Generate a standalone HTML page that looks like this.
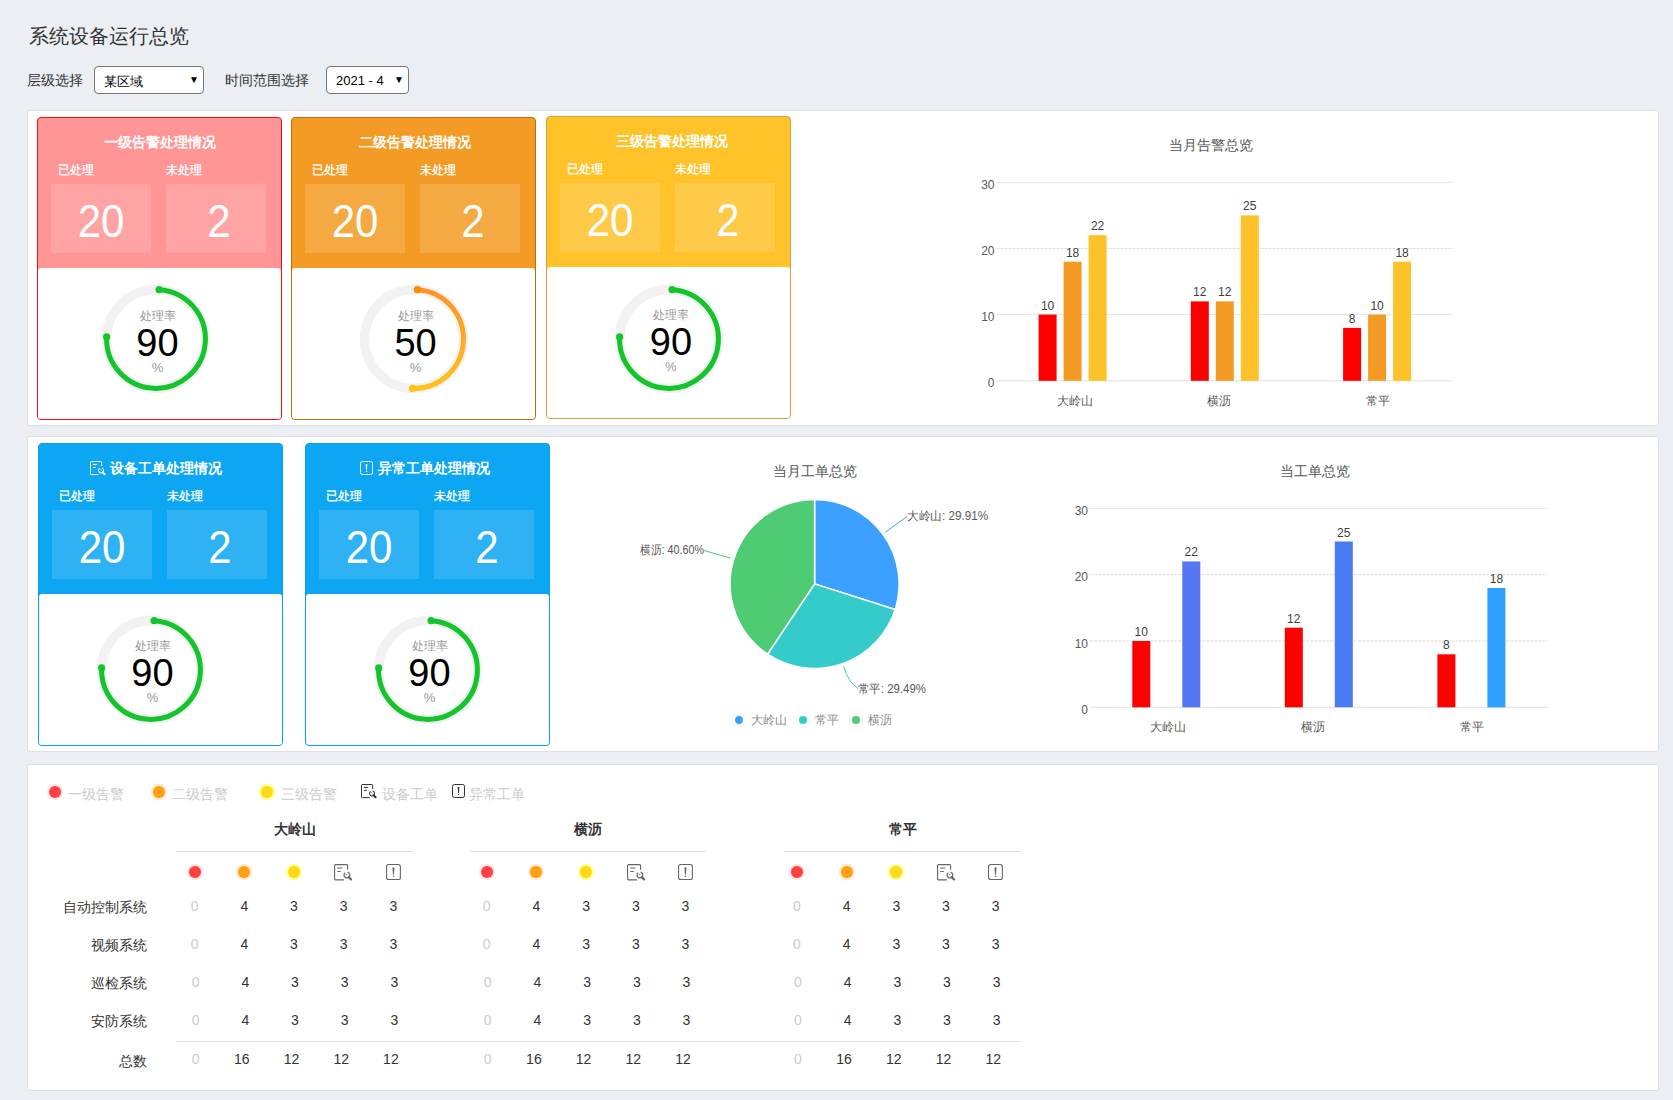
<!DOCTYPE html>
<html><head><meta charset="utf-8"><title>系统设备运行总览</title>
<style>
*{margin:0;padding:0;box-sizing:border-box}
html,body{width:1673px;height:1100px;overflow:hidden}
body{background:#ebeef3;font-family:"Liberation Sans", sans-serif;color:#333;position:relative}
.abs{position:absolute;white-space:nowrap}
.panel{position:absolute;left:27px;width:1632px;background:#fff;border:1px solid #e0e0e0;border-radius:3px}
.card{position:absolute;width:245px;height:303px;border:1px solid;border-radius:4px;overflow:hidden}
.card .body{position:absolute;left:0;top:150px;width:243px;height:151px;background:#fff;border-radius:3px 3px 0 0}
.card .ttl{position:absolute;left:0;width:243px;top:14px;height:20px;line-height:20px;text-align:center;color:#fff;font-size:14px;font-weight:bold}
.card .lbl{position:absolute;top:43.5px;height:16px;line-height:16px;font-size:12px;color:#fff;-webkit-text-stroke:0.3px #fff}
.card .box{position:absolute;top:66px;width:100px;height:69px;background:rgba(255,255,255,0.14);color:#fff;font-size:42px;line-height:69px;text-align:center}
.card .box span{display:inline-block;transform:scaleY(1.1) translateY(2px)}
.g{position:absolute;width:120px;height:120px}
.g .t1{position:absolute;left:0;width:120px;text-align:center;font-size:12px;color:#999;line-height:14px}
.g .t2{position:absolute;left:0;width:120px;text-align:center;font-size:38px;color:#000;line-height:38px}
.g .t3{position:absolute;left:0;width:120px;text-align:center;font-size:13px;color:#999;line-height:14px}
</style></head><body>

<div class="abs" style="left:29px;top:22px;font-size:20px;line-height:28px;color:#333">系统设备运行总览</div>
<div class="abs" style="left:27px;top:70px;font-size:14px;line-height:20px;color:#333">层级选择</div>
<div class="abs" style="left:94px;top:66px;width:110px;height:28px;border:1px solid #767676;border-radius:4px;background:#fff"></div>
<div class="abs" style="left:104px;top:74px;font-size:13px;line-height:16px;color:#000">某区域</div>
<div class="abs" style="left:189px;top:74px;font-size:10px;line-height:12px;color:#000">▼</div>
<div class="abs" style="left:225px;top:70px;font-size:14px;line-height:20px;color:#333">时间范围选择</div>
<div class="abs" style="left:326px;top:66px;width:83px;height:28px;border:1px solid #767676;border-radius:4px;background:#fff"></div>
<div class="abs" style="left:336px;top:73px;font-size:13px;line-height:16px;color:#000">2021 - 4</div>
<div class="abs" style="left:394px;top:74px;font-size:10px;line-height:12px;color:#000">▼</div>
<div class="panel" style="top:110px;height:316px"></div>
<div class="panel" style="top:436px;height:316px"></div>
<div class="panel" style="top:764px;height:327px"></div>
<div class="card" style="left:37px;top:117px;background:#ff9595;border-color:#f01010"><div class="ttl" style="left:0.5px">一级告警处理情况</div><div class="lbl" style="left:20px">已处理</div><div class="lbl" style="left:128px">未处理</div><div class="box" style="left:13px"><span>20</span></div><div class="box" style="left:128px;padding-left:6px"><span>2</span></div><div class="body"></div></div><svg class="abs" style="left:95.5px;top:279.4px" width="120" height="120" viewBox="95.5 279.4 120 120"><circle cx="155.5" cy="339.4" r="49.4" fill="none" stroke="#f2f2f2" stroke-width="9.6"/><path d="M158.60,290.10 A49.4,49.4 0 1 1 106.14,337.33" fill="none" stroke="#13c52b" stroke-width="5" stroke-linecap="round"/><circle cx="158.60" cy="290.10" r="3.6" fill="#13c52b"/><circle cx="106.14" cy="337.33" r="3.6" fill="#13c52b"/></svg><div class="g" style="left:97.5px;top:279.4px"><div class="t1" style="top:30px">处理率</div><div class="t2" style="top:44.5px">90</div><div class="t3" style="top:82px">%</div></div>
<div class="card" style="left:291px;top:117px;background:#f39b25;border-color:#b8700a"><div class="ttl" style="left:1px">二级告警处理情况</div><div class="lbl" style="left:20px">已处理</div><div class="lbl" style="left:128px">未处理</div><div class="box" style="left:13px"><span>20</span></div><div class="box" style="left:128px;padding-left:6px"><span>2</span></div><div class="body"></div></div><svg class="abs" style="left:353.6px;top:279.1px" width="120" height="120" viewBox="353.6 279.1 120 120"><defs><linearGradient id="gg2" x1="0" y1="0" x2="0" y2="1"><stop offset="0" stop-color="#ff9429"/><stop offset="1" stop-color="#ffc21e"/></linearGradient></defs><circle cx="413.6" cy="339.1" r="49.4" fill="none" stroke="#f2f2f2" stroke-width="9.6"/><path d="M417.05,289.82 A49.4,49.4 0 0 1 412.13,388.48" fill="none" stroke="url(#gg2)" stroke-width="5" stroke-linecap="round"/><circle cx="417.05" cy="289.82" r="3.6" fill="#ff8800"/><circle cx="412.13" cy="388.48" r="3.6" fill="#ffc400"/></svg><div class="g" style="left:355.6px;top:279.1px"><div class="t1" style="top:30px">处理率</div><div class="t2" style="top:44.5px">50</div><div class="t3" style="top:82px">%</div></div>
<div class="card" style="left:546px;top:116px;background:#ffc229;border-color:#d9a040"><div class="ttl" style="left:3px">三级告警处理情况</div><div class="lbl" style="left:20px">已处理</div><div class="lbl" style="left:128px">未处理</div><div class="box" style="left:13px"><span>20</span></div><div class="box" style="left:128px;padding-left:6px"><span>2</span></div><div class="body"></div></div><svg class="abs" style="left:608.9px;top:279.3px" width="120" height="120" viewBox="608.9 279.3 120 120"><circle cx="668.9" cy="339.3" r="49.4" fill="none" stroke="#f2f2f2" stroke-width="9.6"/><path d="M672.00,290.00 A49.4,49.4 0 1 1 619.54,337.23" fill="none" stroke="#13c52b" stroke-width="5" stroke-linecap="round"/><circle cx="672.00" cy="290.00" r="3.6" fill="#13c52b"/><circle cx="619.54" cy="337.23" r="3.6" fill="#13c52b"/></svg><div class="g" style="left:610.9px;top:278.3px"><div class="t1" style="top:30px">处理率</div><div class="t2" style="top:44.5px">90</div><div class="t3" style="top:82px">%</div></div>
<div class="card" style="left:38px;top:443px;background:#0ca6f2;border-color:#05a0f0"><div class="ttl" style="left:71px;width:auto;text-align:left">设备工单处理情况</div><svg class="abs" style="left:51px;top:17.2px;overflow:visible" width="16.00" height="15.00" viewBox="0 0 16 15"><path d="M11.6 4.9V1.3Q11.6 0.5 10.8 0.5H1.3Q0.5 0.5 0.5 1.3V12.8Q0.5 13.6 1.3 13.6H8.6" fill="none" stroke="#fff" stroke-width="1.0"/><path d="M2.8 3.4H7.2M2.8 6.4H5.8" fill="none" stroke="#fff" stroke-width="1.0"/><path d="M9.6 7.4A2.5 2.5 0 1 0 11.6 7.0" fill="none" stroke="#fff" stroke-width="1.1"/><path d="M10.5 8.6L11.3 9.3" fill="none" stroke="#fff" stroke-width="1.0"/><path d="M12.6 11.2L14.6 13.2" fill="none" stroke="#fff" stroke-width="2.0" stroke-linecap="round"/></svg><div class="lbl" style="left:20px">已处理</div><div class="lbl" style="left:128px">未处理</div><div class="box" style="left:13px"><span>20</span></div><div class="box" style="left:128px;padding-left:6px"><span>2</span></div><div class="body"></div></div><svg class="abs" style="left:90.5px;top:610.4px" width="120" height="120" viewBox="90.5 610.4 120 120"><circle cx="150.5" cy="670.4" r="49.4" fill="none" stroke="#f2f2f2" stroke-width="9.6"/><path d="M153.60,621.10 A49.4,49.4 0 1 1 101.14,668.33" fill="none" stroke="#13c52b" stroke-width="5" stroke-linecap="round"/><circle cx="153.60" cy="621.10" r="3.6" fill="#13c52b"/><circle cx="101.14" cy="668.33" r="3.6" fill="#13c52b"/></svg><div class="g" style="left:92.5px;top:609.4px"><div class="t1" style="top:30px">处理率</div><div class="t2" style="top:44.5px">90</div><div class="t3" style="top:82px">%</div></div>
<div class="card" style="left:305px;top:443px;background:#0ca6f2;border-color:#05a0f0"><div class="ttl" style="left:72px;width:auto;text-align:left">异常工单处理情况</div><svg class="abs" style="left:54px;top:17.2px;overflow:visible" width="14.00" height="15.00" viewBox="0 0 14 15"><rect x="0.5" y="0.5" width="12" height="13" rx="1.8" fill="none" stroke="#fff" stroke-width="1.0"/><path d="M5.6 3.3Q6.5 2.5 7.4 3.3L6.9 9.3H6.1Z" fill="#fff"/><circle cx="6.5" cy="10.6" r="0.65" fill="#fff"/></svg><div class="lbl" style="left:20px">已处理</div><div class="lbl" style="left:128px">未处理</div><div class="box" style="left:13px"><span>20</span></div><div class="box" style="left:128px;padding-left:6px"><span>2</span></div><div class="body"></div></div><svg class="abs" style="left:367.5px;top:610.4px" width="120" height="120" viewBox="367.5 610.4 120 120"><circle cx="427.5" cy="670.4" r="49.4" fill="none" stroke="#f2f2f2" stroke-width="9.6"/><path d="M430.60,621.10 A49.4,49.4 0 1 1 378.14,668.33" fill="none" stroke="#13c52b" stroke-width="5" stroke-linecap="round"/><circle cx="430.60" cy="621.10" r="3.6" fill="#13c52b"/><circle cx="378.14" cy="668.33" r="3.6" fill="#13c52b"/></svg><div class="g" style="left:369.5px;top:609.4px"><div class="t1" style="top:30px">处理率</div><div class="t2" style="top:44.5px">90</div><div class="t3" style="top:82px">%</div></div>
<div class="abs" style="left:1111px;width:200px;text-align:center;top:135px;line-height:20px;font-size:14px;color:#555">当月告警总览</div><svg class="abs" style="left:0;top:0" width="1673" height="1100"><line x1="996.5" y1="380.8" x2="1453.2" y2="380.8" stroke="#e0e0e0" stroke-width="1"/><text x="994.5" y="387.3" text-anchor="end" font-size="12" fill="#595959" font-family="Liberation Sans">0</text><line x1="996.5" y1="314.6" x2="1453.2" y2="314.6" stroke="#dcdcdc" stroke-width="1" stroke-dasharray="3,1"/><text x="994.5" y="321.1" text-anchor="end" font-size="12" fill="#595959" font-family="Liberation Sans">10</text><line x1="996.5" y1="248.5" x2="1453.2" y2="248.5" stroke="#dcdcdc" stroke-width="1" stroke-dasharray="3,1"/><text x="994.5" y="255.0" text-anchor="end" font-size="12" fill="#595959" font-family="Liberation Sans">20</text><line x1="996.5" y1="182.3" x2="1453.2" y2="182.3" stroke="#dcdcdc" stroke-width="1" stroke-dasharray="3,1"/><text x="994.5" y="188.8" text-anchor="end" font-size="12" fill="#595959" font-family="Liberation Sans">30</text><rect x="1038.6" y="314.6" width="18" height="66.2" fill="#ff0000"/><text x="1047.6" y="309.6" text-anchor="middle" font-size="12" fill="#404040" font-family="Liberation Sans">10</text><rect x="1063.6" y="261.7" width="18" height="119.1" fill="#f39b25"/><text x="1072.6" y="256.7" text-anchor="middle" font-size="12" fill="#404040" font-family="Liberation Sans">18</text><rect x="1088.6" y="235.2" width="18" height="145.6" fill="#fdc22a"/><text x="1097.6" y="230.2" text-anchor="middle" font-size="12" fill="#404040" font-family="Liberation Sans">22</text><text x="1074.6" y="404.8" text-anchor="middle" font-size="12" fill="#595959">大岭山</text><rect x="1190.8" y="301.4" width="18" height="79.4" fill="#ff0000"/><text x="1199.8" y="296.4" text-anchor="middle" font-size="12" fill="#404040" font-family="Liberation Sans">12</text><rect x="1215.8" y="301.4" width="18" height="79.4" fill="#f39b25"/><text x="1224.8" y="296.4" text-anchor="middle" font-size="12" fill="#404040" font-family="Liberation Sans">12</text><rect x="1240.8" y="215.4" width="18" height="165.4" fill="#fdc22a"/><text x="1249.8" y="210.4" text-anchor="middle" font-size="12" fill="#404040" font-family="Liberation Sans">25</text><text x="1218.8" y="404.8" text-anchor="middle" font-size="12" fill="#595959">横沥</text><rect x="1343.1" y="327.9" width="18" height="52.9" fill="#ff0000"/><text x="1352.1" y="322.9" text-anchor="middle" font-size="12" fill="#404040" font-family="Liberation Sans">8</text><rect x="1368.1" y="314.6" width="18" height="66.2" fill="#f39b25"/><text x="1377.1" y="309.6" text-anchor="middle" font-size="12" fill="#404040" font-family="Liberation Sans">10</text><rect x="1393.1" y="261.7" width="18" height="119.1" fill="#fdc22a"/><text x="1402.1" y="256.7" text-anchor="middle" font-size="12" fill="#404040" font-family="Liberation Sans">18</text><text x="1377.6" y="404.8" text-anchor="middle" font-size="12" fill="#595959">常平</text></svg>
<div class="abs" style="left:1215px;width:200px;text-align:center;top:461px;line-height:20px;font-size:14px;color:#555">当工单总览</div><svg class="abs" style="left:0;top:0" width="1673" height="1100"><line x1="1090" y1="707.3" x2="1547.7" y2="707.3" stroke="#e0e0e0" stroke-width="1"/><text x="1088" y="713.8" text-anchor="end" font-size="12" fill="#595959" font-family="Liberation Sans">0</text><line x1="1090" y1="641.0" x2="1547.7" y2="641.0" stroke="#dcdcdc" stroke-width="1" stroke-dasharray="3,1"/><text x="1088" y="647.5" text-anchor="end" font-size="12" fill="#595959" font-family="Liberation Sans">10</text><line x1="1090" y1="574.7" x2="1547.7" y2="574.7" stroke="#dcdcdc" stroke-width="1" stroke-dasharray="3,1"/><text x="1088" y="581.2" text-anchor="end" font-size="12" fill="#595959" font-family="Liberation Sans">20</text><line x1="1090" y1="508.4" x2="1547.7" y2="508.4" stroke="#dcdcdc" stroke-width="1" stroke-dasharray="3,1"/><text x="1088" y="514.9" text-anchor="end" font-size="12" fill="#595959" font-family="Liberation Sans">30</text><rect x="1132.3" y="641.0" width="18" height="66.3" fill="#ff0000"/><text x="1141.3" y="636.0" text-anchor="middle" font-size="12" fill="#404040" font-family="Liberation Sans">10</text><rect x="1182.3" y="561.4" width="18" height="145.9" fill="#5677f3"/><text x="1191.3" y="556.4" text-anchor="middle" font-size="12" fill="#404040" font-family="Liberation Sans">22</text><text x="1168.3" y="731.3" text-anchor="middle" font-size="12" fill="#595959">大岭山</text><rect x="1284.8" y="627.7" width="18" height="79.6" fill="#ff0000"/><text x="1293.8" y="622.7" text-anchor="middle" font-size="12" fill="#404040" font-family="Liberation Sans">12</text><rect x="1334.8" y="541.5" width="18" height="165.7" fill="#4a7bf7"/><text x="1343.8" y="536.5" text-anchor="middle" font-size="12" fill="#404040" font-family="Liberation Sans">25</text><text x="1312.8" y="731.3" text-anchor="middle" font-size="12" fill="#595959">横沥</text><rect x="1437.4" y="654.3" width="18" height="53.0" fill="#ff0000"/><text x="1446.4" y="649.3" text-anchor="middle" font-size="12" fill="#404040" font-family="Liberation Sans">8</text><rect x="1487.4" y="588.0" width="18" height="119.3" fill="#2ea0ff"/><text x="1496.4" y="583.0" text-anchor="middle" font-size="12" fill="#404040" font-family="Liberation Sans">18</text><text x="1471.9" y="731.3" text-anchor="middle" font-size="12" fill="#595959">常平</text></svg>
<div class="abs" style="left:715px;width:200px;text-align:center;top:461px;line-height:20px;font-size:14px;color:#555">当月工单总览</div><svg class="abs" style="left:0;top:0" width="1673" height="1100"><path d="M814.6,583.9 L814.60,499.40 A84.5,84.5 0 0 1 895.11,609.56 Z" fill="#3ba0ff" stroke="#fff" stroke-width="1.5"/><path d="M814.6,583.9 L895.11,609.56 A84.5,84.5 0 0 1 767.54,654.09 Z" fill="#36cbcb" stroke="#fff" stroke-width="1.5"/><path d="M814.6,583.9 L767.54,654.09 A84.5,84.5 0 0 1 814.60,499.40 Z" fill="#4ecb73" stroke="#fff" stroke-width="1.5"/><path d="M885.2,532.3 L907,516.5" stroke="#3ba0ff" fill="none"/><path d="M730.8,558.2 L704,550.5" stroke="#4ecb73" fill="none"/><path d="M843.7,666.4 Q848,682 858,688.5" stroke="#36cbcb" fill="none"/><text x="907" y="520" font-size="12" fill="#595959" textLength="81" lengthAdjust="spacingAndGlyphs">大岭山: 29.91%</text><text x="640" y="554" font-size="12" fill="#595959" textLength="64" lengthAdjust="spacingAndGlyphs">横沥: 40.60%</text><text x="858" y="692.5" font-size="12" fill="#595959" textLength="68" lengthAdjust="spacingAndGlyphs">常平: 29.49%</text><circle cx="739" cy="720" r="4" fill="#3ba0ff"/><text x="751" y="724" font-size="12" fill="#8c8c8c">大岭山</text><circle cx="803" cy="720" r="4" fill="#36cbcb"/><text x="815" y="724" font-size="12" fill="#8c8c8c">常平</text><circle cx="856" cy="720" r="4" fill="#4ecb73"/><text x="868" y="724" font-size="12" fill="#8c8c8c">横沥</text></svg>
<div class="abs" style="left:48.9px;top:786.3px;width:12px;height:12px;border-radius:50%;background:#ff4141;box-shadow:0 0 0 2px #ffe3e3"></div>
<div class="abs" style="left:68px;top:784px;font-size:14px;line-height:20px;color:#ccc">一级告警</div>
<div class="abs" style="left:152.8px;top:786.3px;width:12px;height:12px;border-radius:50%;background:#ffa116;box-shadow:0 0 0 2px #ffe6c4"></div>
<div class="abs" style="left:172px;top:784px;font-size:14px;line-height:20px;color:#ccc">二级告警</div>
<div class="abs" style="left:260.9px;top:786.3px;width:12px;height:12px;border-radius:50%;background:#ffd816;box-shadow:0 0 0 2px #ffff88"></div>
<div class="abs" style="left:281px;top:784px;font-size:14px;line-height:20px;color:#ccc">三级告警</div>
<svg class="abs" style="left:361.2px;top:783.8px;overflow:visible" width="16.00" height="15.00" viewBox="0 0 16 15"><path d="M11.6 4.9V1.3Q11.6 0.5 10.8 0.5H1.3Q0.5 0.5 0.5 1.3V12.8Q0.5 13.6 1.3 13.6H8.6" fill="none" stroke="#333" stroke-width="1.0"/><path d="M2.8 3.4H7.2M2.8 6.4H5.8" fill="none" stroke="#333" stroke-width="1.0"/><path d="M9.6 7.4A2.5 2.5 0 1 0 11.6 7.0" fill="none" stroke="#333" stroke-width="1.1"/><path d="M10.5 8.6L11.3 9.3" fill="none" stroke="#333" stroke-width="1.0"/><path d="M12.6 11.2L14.6 13.2" fill="none" stroke="#333" stroke-width="2.0" stroke-linecap="round"/></svg>
<div class="abs" style="left:382px;top:784px;font-size:14px;line-height:20px;color:#ccc">设备工单</div>
<svg class="abs" style="left:451.9px;top:783.8px;overflow:visible" width="14.00" height="15.00" viewBox="0 0 14 15"><rect x="0.5" y="0.5" width="12" height="13" rx="1.8" fill="none" stroke="#333" stroke-width="1.0"/><path d="M5.6 3.3Q6.5 2.5 7.4 3.3L6.9 9.3H6.1Z" fill="#333"/><circle cx="6.5" cy="10.6" r="0.65" fill="#333"/></svg>
<div class="abs" style="left:469px;top:784px;font-size:14px;line-height:20px;color:#ccc">异常工单</div>
<svg class="abs" style="left:0;top:0" width="1673" height="1100">
<line x1="176" y1="851.5" x2="413" y2="851.5" stroke="#e0e0e0"/>
<line x1="469" y1="851.5" x2="706" y2="851.5" stroke="#e0e0e0"/>
<line x1="784" y1="851.5" x2="1021" y2="851.5" stroke="#e0e0e0"/>
<line x1="176" y1="1041.5" x2="1021" y2="1041.5" stroke="#e0e0e0"/>
</svg>
<div class="abs" style="left:234.5px;width:120px;text-align:center;top:819px;font-size:14px;line-height:20px;font-weight:bold;color:#333">大岭山</div>
<div class="abs" style="left:188.6px;top:866px;width:12px;height:12px;border-radius:50%;background:#ff4141;box-shadow:0 0 0 2px #ffe3e3"></div>
<div class="abs" style="left:238.3px;top:866px;width:12px;height:12px;border-radius:50%;background:#ffa116;box-shadow:0 0 0 2px #ffe6c4"></div>
<div class="abs" style="left:288.0px;top:866px;width:12px;height:12px;border-radius:50%;background:#ffd816;box-shadow:0 0 0 2px #ffff88"></div>
<svg class="abs" style="left:334.40000000000003px;top:863.5px;overflow:visible" width="18.72" height="17.55" viewBox="0 0 16 15"><path d="M11.6 4.9V1.3Q11.6 0.5 10.8 0.5H1.3Q0.5 0.5 0.5 1.3V12.8Q0.5 13.6 1.3 13.6H8.6" fill="none" stroke="#666" stroke-width="0.95"/><path d="M2.8 3.4H7.2M2.8 6.4H5.8" fill="none" stroke="#666" stroke-width="0.95"/><path d="M9.6 7.4A2.5 2.5 0 1 0 11.6 7.0" fill="none" stroke="#666" stroke-width="1.045"/><path d="M10.5 8.6L11.3 9.3" fill="none" stroke="#666" stroke-width="0.95"/><path d="M12.6 11.2L14.6 13.2" fill="none" stroke="#666" stroke-width="1.9" stroke-linecap="round"/></svg>
<svg class="abs" style="left:385.7px;top:863.6px;overflow:visible" width="16.10" height="17.25" viewBox="0 0 14 15"><rect x="0.5" y="0.5" width="12" height="13" rx="1.8" fill="none" stroke="#666" stroke-width="0.95"/><path d="M5.6 3.3Q6.5 2.5 7.4 3.3L6.9 9.3H6.1Z" fill="#666"/><circle cx="6.5" cy="10.6" r="0.65" fill="#666"/></svg>
<div class="abs" style="left:174.6px;width:40px;text-align:center;top:898px;font-size:14px;line-height:16px;color:#ccc">0</div>
<div class="abs" style="left:224.3px;width:40px;text-align:center;top:898px;font-size:14px;line-height:16px;color:#333">4</div>
<div class="abs" style="left:274.0px;width:40px;text-align:center;top:898px;font-size:14px;line-height:16px;color:#333">3</div>
<div class="abs" style="left:323.70000000000005px;width:40px;text-align:center;top:898px;font-size:14px;line-height:16px;color:#333">3</div>
<div class="abs" style="left:373.4px;width:40px;text-align:center;top:898px;font-size:14px;line-height:16px;color:#333">3</div>
<div class="abs" style="left:174.6px;width:40px;text-align:center;top:936px;font-size:14px;line-height:16px;color:#ccc">0</div>
<div class="abs" style="left:224.3px;width:40px;text-align:center;top:936px;font-size:14px;line-height:16px;color:#333">4</div>
<div class="abs" style="left:274.0px;width:40px;text-align:center;top:936px;font-size:14px;line-height:16px;color:#333">3</div>
<div class="abs" style="left:323.70000000000005px;width:40px;text-align:center;top:936px;font-size:14px;line-height:16px;color:#333">3</div>
<div class="abs" style="left:373.4px;width:40px;text-align:center;top:936px;font-size:14px;line-height:16px;color:#333">3</div>
<div class="abs" style="left:175.6px;width:40px;text-align:center;top:973.5px;font-size:14px;line-height:16px;color:#ccc">0</div>
<div class="abs" style="left:225.3px;width:40px;text-align:center;top:973.5px;font-size:14px;line-height:16px;color:#333">4</div>
<div class="abs" style="left:275.0px;width:40px;text-align:center;top:973.5px;font-size:14px;line-height:16px;color:#333">3</div>
<div class="abs" style="left:324.70000000000005px;width:40px;text-align:center;top:973.5px;font-size:14px;line-height:16px;color:#333">3</div>
<div class="abs" style="left:374.4px;width:40px;text-align:center;top:973.5px;font-size:14px;line-height:16px;color:#333">3</div>
<div class="abs" style="left:175.6px;width:40px;text-align:center;top:1011.5px;font-size:14px;line-height:16px;color:#ccc">0</div>
<div class="abs" style="left:225.3px;width:40px;text-align:center;top:1011.5px;font-size:14px;line-height:16px;color:#333">4</div>
<div class="abs" style="left:275.0px;width:40px;text-align:center;top:1011.5px;font-size:14px;line-height:16px;color:#333">3</div>
<div class="abs" style="left:324.70000000000005px;width:40px;text-align:center;top:1011.5px;font-size:14px;line-height:16px;color:#333">3</div>
<div class="abs" style="left:374.4px;width:40px;text-align:center;top:1011.5px;font-size:14px;line-height:16px;color:#333">3</div>
<div class="abs" style="left:175.6px;width:40px;text-align:center;top:1051px;font-size:14px;line-height:16px;color:#ccc">0</div>
<div class="abs" style="left:221.8px;width:40px;text-align:center;top:1051px;font-size:14px;line-height:16px;color:#333">16</div>
<div class="abs" style="left:271.5px;width:40px;text-align:center;top:1051px;font-size:14px;line-height:16px;color:#333">12</div>
<div class="abs" style="left:321.20000000000005px;width:40px;text-align:center;top:1051px;font-size:14px;line-height:16px;color:#333">12</div>
<div class="abs" style="left:370.9px;width:40px;text-align:center;top:1051px;font-size:14px;line-height:16px;color:#333">12</div>
<div class="abs" style="left:527.5px;width:120px;text-align:center;top:819px;font-size:14px;line-height:20px;font-weight:bold;color:#333">横沥</div>
<div class="abs" style="left:480.7px;top:866px;width:12px;height:12px;border-radius:50%;background:#ff4141;box-shadow:0 0 0 2px #ffe3e3"></div>
<div class="abs" style="left:530.4px;top:866px;width:12px;height:12px;border-radius:50%;background:#ffa116;box-shadow:0 0 0 2px #ffe6c4"></div>
<div class="abs" style="left:580.1px;top:866px;width:12px;height:12px;border-radius:50%;background:#ffd816;box-shadow:0 0 0 2px #ffff88"></div>
<svg class="abs" style="left:626.5px;top:863.5px;overflow:visible" width="18.72" height="17.55" viewBox="0 0 16 15"><path d="M11.6 4.9V1.3Q11.6 0.5 10.8 0.5H1.3Q0.5 0.5 0.5 1.3V12.8Q0.5 13.6 1.3 13.6H8.6" fill="none" stroke="#666" stroke-width="0.95"/><path d="M2.8 3.4H7.2M2.8 6.4H5.8" fill="none" stroke="#666" stroke-width="0.95"/><path d="M9.6 7.4A2.5 2.5 0 1 0 11.6 7.0" fill="none" stroke="#666" stroke-width="1.045"/><path d="M10.5 8.6L11.3 9.3" fill="none" stroke="#666" stroke-width="0.95"/><path d="M12.6 11.2L14.6 13.2" fill="none" stroke="#666" stroke-width="1.9" stroke-linecap="round"/></svg>
<svg class="abs" style="left:677.8px;top:863.6px;overflow:visible" width="16.10" height="17.25" viewBox="0 0 14 15"><rect x="0.5" y="0.5" width="12" height="13" rx="1.8" fill="none" stroke="#666" stroke-width="0.95"/><path d="M5.6 3.3Q6.5 2.5 7.4 3.3L6.9 9.3H6.1Z" fill="#666"/><circle cx="6.5" cy="10.6" r="0.65" fill="#666"/></svg>
<div class="abs" style="left:466.7px;width:40px;text-align:center;top:898px;font-size:14px;line-height:16px;color:#ccc">0</div>
<div class="abs" style="left:516.4px;width:40px;text-align:center;top:898px;font-size:14px;line-height:16px;color:#333">4</div>
<div class="abs" style="left:566.1px;width:40px;text-align:center;top:898px;font-size:14px;line-height:16px;color:#333">3</div>
<div class="abs" style="left:615.8px;width:40px;text-align:center;top:898px;font-size:14px;line-height:16px;color:#333">3</div>
<div class="abs" style="left:665.5px;width:40px;text-align:center;top:898px;font-size:14px;line-height:16px;color:#333">3</div>
<div class="abs" style="left:466.7px;width:40px;text-align:center;top:936px;font-size:14px;line-height:16px;color:#ccc">0</div>
<div class="abs" style="left:516.4px;width:40px;text-align:center;top:936px;font-size:14px;line-height:16px;color:#333">4</div>
<div class="abs" style="left:566.1px;width:40px;text-align:center;top:936px;font-size:14px;line-height:16px;color:#333">3</div>
<div class="abs" style="left:615.8px;width:40px;text-align:center;top:936px;font-size:14px;line-height:16px;color:#333">3</div>
<div class="abs" style="left:665.5px;width:40px;text-align:center;top:936px;font-size:14px;line-height:16px;color:#333">3</div>
<div class="abs" style="left:467.7px;width:40px;text-align:center;top:973.5px;font-size:14px;line-height:16px;color:#ccc">0</div>
<div class="abs" style="left:517.4px;width:40px;text-align:center;top:973.5px;font-size:14px;line-height:16px;color:#333">4</div>
<div class="abs" style="left:567.1px;width:40px;text-align:center;top:973.5px;font-size:14px;line-height:16px;color:#333">3</div>
<div class="abs" style="left:616.8px;width:40px;text-align:center;top:973.5px;font-size:14px;line-height:16px;color:#333">3</div>
<div class="abs" style="left:666.5px;width:40px;text-align:center;top:973.5px;font-size:14px;line-height:16px;color:#333">3</div>
<div class="abs" style="left:467.7px;width:40px;text-align:center;top:1011.5px;font-size:14px;line-height:16px;color:#ccc">0</div>
<div class="abs" style="left:517.4px;width:40px;text-align:center;top:1011.5px;font-size:14px;line-height:16px;color:#333">4</div>
<div class="abs" style="left:567.1px;width:40px;text-align:center;top:1011.5px;font-size:14px;line-height:16px;color:#333">3</div>
<div class="abs" style="left:616.8px;width:40px;text-align:center;top:1011.5px;font-size:14px;line-height:16px;color:#333">3</div>
<div class="abs" style="left:666.5px;width:40px;text-align:center;top:1011.5px;font-size:14px;line-height:16px;color:#333">3</div>
<div class="abs" style="left:467.7px;width:40px;text-align:center;top:1051px;font-size:14px;line-height:16px;color:#ccc">0</div>
<div class="abs" style="left:513.9px;width:40px;text-align:center;top:1051px;font-size:14px;line-height:16px;color:#333">16</div>
<div class="abs" style="left:563.6px;width:40px;text-align:center;top:1051px;font-size:14px;line-height:16px;color:#333">12</div>
<div class="abs" style="left:613.3px;width:40px;text-align:center;top:1051px;font-size:14px;line-height:16px;color:#333">12</div>
<div class="abs" style="left:663.0px;width:40px;text-align:center;top:1051px;font-size:14px;line-height:16px;color:#333">12</div>
<div class="abs" style="left:842.5px;width:120px;text-align:center;top:819px;font-size:14px;line-height:20px;font-weight:bold;color:#333">常平</div>
<div class="abs" style="left:790.9px;top:866px;width:12px;height:12px;border-radius:50%;background:#ff4141;box-shadow:0 0 0 2px #ffe3e3"></div>
<div class="abs" style="left:840.6px;top:866px;width:12px;height:12px;border-radius:50%;background:#ffa116;box-shadow:0 0 0 2px #ffe6c4"></div>
<div class="abs" style="left:890.3px;top:866px;width:12px;height:12px;border-radius:50%;background:#ffd816;box-shadow:0 0 0 2px #ffff88"></div>
<svg class="abs" style="left:936.7px;top:863.5px;overflow:visible" width="18.72" height="17.55" viewBox="0 0 16 15"><path d="M11.6 4.9V1.3Q11.6 0.5 10.8 0.5H1.3Q0.5 0.5 0.5 1.3V12.8Q0.5 13.6 1.3 13.6H8.6" fill="none" stroke="#666" stroke-width="0.95"/><path d="M2.8 3.4H7.2M2.8 6.4H5.8" fill="none" stroke="#666" stroke-width="0.95"/><path d="M9.6 7.4A2.5 2.5 0 1 0 11.6 7.0" fill="none" stroke="#666" stroke-width="1.045"/><path d="M10.5 8.6L11.3 9.3" fill="none" stroke="#666" stroke-width="0.95"/><path d="M12.6 11.2L14.6 13.2" fill="none" stroke="#666" stroke-width="1.9" stroke-linecap="round"/></svg>
<svg class="abs" style="left:988.0px;top:863.6px;overflow:visible" width="16.10" height="17.25" viewBox="0 0 14 15"><rect x="0.5" y="0.5" width="12" height="13" rx="1.8" fill="none" stroke="#666" stroke-width="0.95"/><path d="M5.6 3.3Q6.5 2.5 7.4 3.3L6.9 9.3H6.1Z" fill="#666"/><circle cx="6.5" cy="10.6" r="0.65" fill="#666"/></svg>
<div class="abs" style="left:776.9px;width:40px;text-align:center;top:898px;font-size:14px;line-height:16px;color:#ccc">0</div>
<div class="abs" style="left:826.6px;width:40px;text-align:center;top:898px;font-size:14px;line-height:16px;color:#333">4</div>
<div class="abs" style="left:876.3px;width:40px;text-align:center;top:898px;font-size:14px;line-height:16px;color:#333">3</div>
<div class="abs" style="left:926.0px;width:40px;text-align:center;top:898px;font-size:14px;line-height:16px;color:#333">3</div>
<div class="abs" style="left:975.7px;width:40px;text-align:center;top:898px;font-size:14px;line-height:16px;color:#333">3</div>
<div class="abs" style="left:776.9px;width:40px;text-align:center;top:936px;font-size:14px;line-height:16px;color:#ccc">0</div>
<div class="abs" style="left:826.6px;width:40px;text-align:center;top:936px;font-size:14px;line-height:16px;color:#333">4</div>
<div class="abs" style="left:876.3px;width:40px;text-align:center;top:936px;font-size:14px;line-height:16px;color:#333">3</div>
<div class="abs" style="left:926.0px;width:40px;text-align:center;top:936px;font-size:14px;line-height:16px;color:#333">3</div>
<div class="abs" style="left:975.7px;width:40px;text-align:center;top:936px;font-size:14px;line-height:16px;color:#333">3</div>
<div class="abs" style="left:777.9px;width:40px;text-align:center;top:973.5px;font-size:14px;line-height:16px;color:#ccc">0</div>
<div class="abs" style="left:827.6px;width:40px;text-align:center;top:973.5px;font-size:14px;line-height:16px;color:#333">4</div>
<div class="abs" style="left:877.3px;width:40px;text-align:center;top:973.5px;font-size:14px;line-height:16px;color:#333">3</div>
<div class="abs" style="left:927.0px;width:40px;text-align:center;top:973.5px;font-size:14px;line-height:16px;color:#333">3</div>
<div class="abs" style="left:976.7px;width:40px;text-align:center;top:973.5px;font-size:14px;line-height:16px;color:#333">3</div>
<div class="abs" style="left:777.9px;width:40px;text-align:center;top:1011.5px;font-size:14px;line-height:16px;color:#ccc">0</div>
<div class="abs" style="left:827.6px;width:40px;text-align:center;top:1011.5px;font-size:14px;line-height:16px;color:#333">4</div>
<div class="abs" style="left:877.3px;width:40px;text-align:center;top:1011.5px;font-size:14px;line-height:16px;color:#333">3</div>
<div class="abs" style="left:927.0px;width:40px;text-align:center;top:1011.5px;font-size:14px;line-height:16px;color:#333">3</div>
<div class="abs" style="left:976.7px;width:40px;text-align:center;top:1011.5px;font-size:14px;line-height:16px;color:#333">3</div>
<div class="abs" style="left:777.9px;width:40px;text-align:center;top:1051px;font-size:14px;line-height:16px;color:#ccc">0</div>
<div class="abs" style="left:824.1px;width:40px;text-align:center;top:1051px;font-size:14px;line-height:16px;color:#333">16</div>
<div class="abs" style="left:873.8px;width:40px;text-align:center;top:1051px;font-size:14px;line-height:16px;color:#333">12</div>
<div class="abs" style="left:923.5px;width:40px;text-align:center;top:1051px;font-size:14px;line-height:16px;color:#333">12</div>
<div class="abs" style="left:973.2px;width:40px;text-align:center;top:1051px;font-size:14px;line-height:16px;color:#333">12</div>
<div class="abs" style="right:1526px;top:898px;font-size:14px;line-height:18px;color:#333">自动控制系统</div>
<div class="abs" style="right:1526px;top:936px;font-size:14px;line-height:18px;color:#333">视频系统</div>
<div class="abs" style="right:1526px;top:973.5px;font-size:14px;line-height:18px;color:#333">巡检系统</div>
<div class="abs" style="right:1526px;top:1011.5px;font-size:14px;line-height:18px;color:#333">安防系统</div>
<div class="abs" style="right:1526px;top:1052px;font-size:14px;line-height:18px;color:#333">总数</div>
</body></html>
